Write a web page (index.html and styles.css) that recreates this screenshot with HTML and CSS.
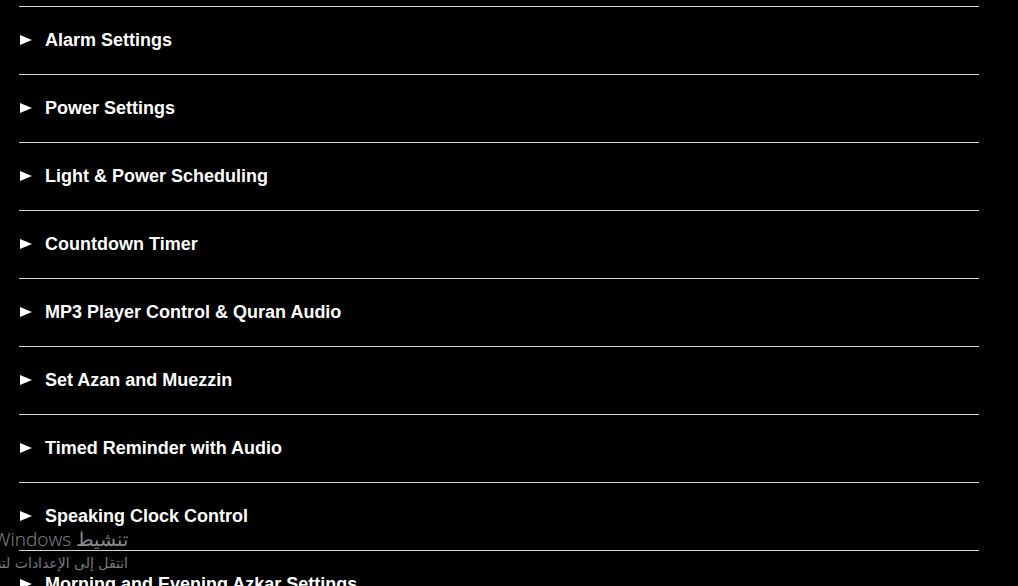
FILE: index.html
```html
<!DOCTYPE html>
<html>
<head>
<meta charset="utf-8">
<link rel="stylesheet" href="styles.css">
</head>
<body>
<div class="list">
  <div class="item"><span class="arrow"></span><span class="label">Alarm Settings</span></div>
  <div class="item"><span class="arrow"></span><span class="label">Power Settings</span></div>
  <div class="item"><span class="arrow"></span><span class="label">Light &amp; Power Scheduling</span></div>
  <div class="item"><span class="arrow"></span><span class="label">Countdown Timer</span></div>
  <div class="item"><span class="arrow"></span><span class="label">MP3 Player Control &amp; Quran Audio</span></div>
  <div class="item"><span class="arrow"></span><span class="label">Set Azan and Muezzin</span></div>
  <div class="item"><span class="arrow"></span><span class="label">Timed Reminder with Audio</span></div>
  <div class="item"><span class="arrow"></span><span class="label">Speaking Clock Control</span></div>
  <div class="item"><span class="arrow"></span><span class="label">Morning and Evening Azkar Settings</span></div>
</div>
<div class="watermark">
  <div class="wm-title">تنشيط Windows</div>
  <div class="wm-sub">انتقل إلى الإعدادات لتنشيط Windows.</div>
</div>
</body>
</html>
```

FILE: styles.css
```css
html, body {
  margin: 0;
  padding: 0;
  background: #000;
  overflow: hidden;
  height: 586px;
}

body {
  font-family: "Liberation Sans", Arial, sans-serif;
  color: #fff;
}

.list {
  width: 960px;
  margin-left: 19px;
  padding-top: 6px;
}

.item {
  border-top: 1px solid #d4d4d4;
  height: 67px;
  display: flex;
  align-items: center;
  font-weight: bold;
  font-size: 18px;
}

.arrow {
  flex: none;
  width: 0;
  height: 0;
  margin-left: 1px;
  margin-right: 13px;
  border-left: 12px solid #fff;
  border-top: 5px solid transparent;
  border-bottom: 5px solid transparent;
  margin-top: -1px;
}

.label {
  white-space: nowrap;
}

.watermark {
  position: absolute;
  right: 890px;
  top: 526px;
  direction: rtl;
  text-align: right;
  color: #8c8c8c;
  font-family: "DejaVu Sans", "Noto Sans", sans-serif;
  white-space: nowrap;
}

.wm-title {
  font-size: 19px;
  line-height: 26px;
  font-family: "Open Sans", "DejaVu Sans", sans-serif;
  font-weight: 300;
}

.wm-sub {
  font-size: 14px;
  line-height: 22px;
  color: #7a7a7a;
}
```
